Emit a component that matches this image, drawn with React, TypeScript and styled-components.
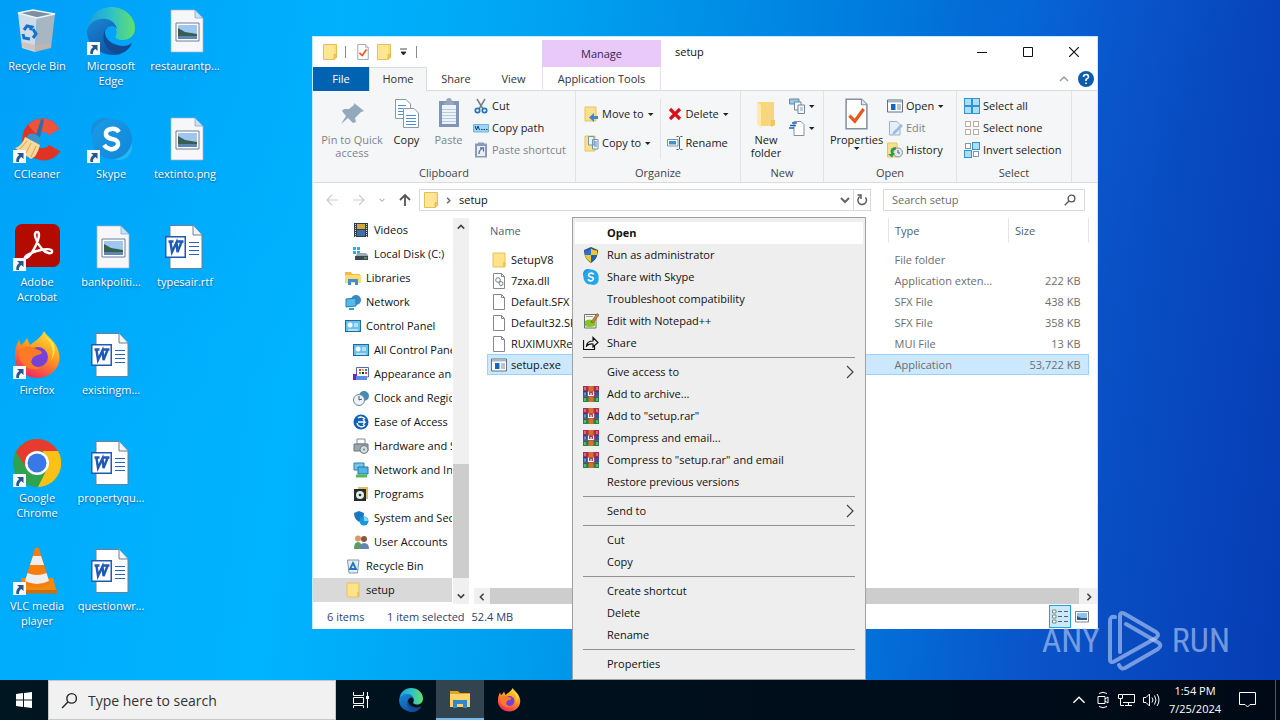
import React from "react";
import styled, { createGlobalStyle, css } from "styled-components";

const GlobalStyle = createGlobalStyle`
  *, *::before, *::after { box-sizing: border-box; }
  body { margin: 0; font-family: "Open Sans", "Noto Sans", sans-serif; font-size: 11px; line-height: 14px; color: #111; }
  button, input { font: inherit; color: inherit; margin: 0; padding: 0; border: 0; background: none; }
  button { cursor: default; }
  svg { display: block; flex: none; }
`;

const Screen = styled.div`
  display: flex;
  flex-direction: column;
  min-height: 100vh;
  overflow: hidden;
`;

const Desktop = styled.main`
  position: relative;
  flex: 1;
  min-height: 680px;
  background:
    linear-gradient(115deg, transparent 62%, rgba(0, 120, 235, 0.2) 64%, transparent 78%),
    radial-gradient(circle at 0% 0%, rgba(0, 140, 240, 0.35), transparent 32%),
    linear-gradient(97deg, #00a9fb 0%, #00b4ff 25%, #00a0f0 42%, #0078dc 66%, #0a53c8 82%, #053cb4 100%);
`;

/* ---------- desktop shortcuts ---------- */

const IconGrid = styled.div`
  display: grid;
  grid-auto-flow: column;
  grid-template-rows: repeat(6, 108px);
  grid-auto-columns: 74px;
  width: max-content;
`;

const Shortcut = styled.button`
  display: flex;
  flex-direction: column;
  align-items: center;
  gap: 3px;
  padding-top: 7px;
  color: #fff;
  line-height: 15px;
  text-align: center;
  text-shadow: 0 1px 2px rgba(0, 40, 90, 0.7);
`;

const ShortcutPicture = styled.span`
  position: relative;
  width: 48px;
  height: 48px;
`;

const LinkBadge = styled.svg`
  position: absolute;
  left: 0;
  bottom: 0;
`;

/* ---------- explorer window ---------- */

const Window = styled.section`
  position: absolute;
  inset: 36px 182px 51px 312px;
  min-width: 786px;
  display: flex;
  flex-direction: column;
  background: #fff;
  border: 1px solid #bdebff;
  border-bottom: 0;
`;

const TitleBar = styled.header`
  display: flex;
  height: 30px;
  flex: none;
`;

const QuickTools = styled.div`
  display: flex;
  align-items: center;
  gap: 8px;
  width: 229px;
  padding-left: 10px;
`;

const ToolButton = styled.button`
  display: flex;
  align-items: center;
  justify-content: center;
`;

const ThinRule = styled.span`
  width: 1px;
  height: 12px;
  margin-right: 3px;
  background: #8a8a8a;
`;

const ManageTab = styled.div`
  width: 119px;
  margin-top: 3px;
  background: #e9c9fa;
  color: #3a2350;
  text-align: center;
  line-height: 28px;
`;

const WindowTitle = styled.h1`
  flex: 1;
  margin: 0;
  padding-left: 14px;
  font-size: 11px;
  font-weight: 400;
  line-height: 30px;
`;

const CaptionButton = styled.button`
  width: 46px;
  display: flex;
  align-items: center;
  justify-content: center;
`;

const TabRow = styled.nav`
  display: flex;
  height: 24px;
  flex: none;
  border-bottom: 1px solid #dadbdc;
`;

const Tab = styled.button<{ $width: number; $kind?: "file" | "active" | "tools" }>`
  width: ${(p) => p.$width}px;
  height: 24px;
  padding-bottom: 1px;
  color: #333;
  ${(p) => p.$kind === "file" && css`background: #0063b1; color: #fff;`}
  ${(p) =>
    p.$kind === "active" &&
    css`background: #f5f6f7; border: solid #dadbdc; border-width: 1px 1px 0; padding-bottom: 2px;`}
  ${(p) => p.$kind === "tools" && css`border: solid #ecdcf5; border-width: 0 1px;`}
`;

const TabRowEnd = styled.div`
  display: flex;
  align-items: center;
  gap: 9px;
  margin-left: auto;
  padding-right: 3px;
`;

const Ribbon = styled.div`
  display: flex;
  height: 92px;
  flex: none;
  background: #f5f6f7;
  border-bottom: 1px solid #dadbdc;
`;

const RibbonGroup = styled.section<{ $width: number }>`
  width: ${(p) => p.$width}px;
  display: flex;
  flex-direction: column;
  border-right: 1px solid #e2e3e4;
`;

const GroupBody = styled.div`
  display: flex;
  flex: 1;
  padding: 4px 4px 0 6px;
`;

const GroupName = styled.h2`
  margin: 0;
  padding-bottom: 2px;
  font-size: 11px;
  font-weight: 400;
  line-height: 15px;
  color: #444;
  text-align: center;
`;

const BigButton = styled.button<{ $width: number; $dim?: boolean }>`
  width: ${(p) => p.$width}px;
  display: flex;
  flex-direction: column;
  align-items: center;
  padding-top: 3px;
  line-height: 13px;
  color: ${(p) => (p.$dim ? "#80838a" : "#222")};
  white-space: nowrap;
  & > svg:first-child { margin-bottom: 3px; }
`;

const SmallColumn = styled.div<{ $inset: number; $loose?: boolean }>`
  display: flex;
  flex-direction: column;
  gap: ${(p) => (p.$loose ? 7 : 0)}px;
  padding-top: ${(p) => (p.$loose ? 8 : 0)}px;
  padding-left: ${(p) => p.$inset}px;
`;

const SmallButton = styled.button<{ $dim?: boolean }>`
  display: flex;
  align-items: center;
  gap: 3px;
  height: 22px;
  white-space: nowrap;
  color: ${(p) => (p.$dim ? "#80838a" : "#222")};
`;

const ColumnRule = styled.span`
  width: 1px;
  margin: 4px 4px 6px 6px;
  background: #e2e3e4;
`;

const AddressRow = styled.div`
  display: flex;
  align-items: center;
  height: 34px;
  flex: none;
  padding: 0 12px;
`;

const HistoryButtons = styled.div`
  display: flex;
  align-items: center;
  gap: 13px;
  width: 94px;
`;

const AddressBox = styled.div`
  display: flex;
  flex: 1;
  height: 22px;
  border: 1px solid #d9d9d9;
`;

const Crumbs = styled.div`
  display: flex;
  flex: 1;
  align-items: center;
  gap: 7px;
  padding-left: 4px;
`;

const RefreshButton = styled(ToolButton)`
  width: 17px;
  border-left: 1px solid #d9d9d9;
`;

const ChevronButton = styled(ToolButton)`
  width: 16px;
`;

const SearchBox = styled.label`
  display: flex;
  align-items: center;
  width: 202px;
  height: 22px;
  margin-left: 12px;
  padding: 0 8px;
  border: 1px solid #d9d9d9;
  input { flex: 1; min-width: 0; height: 14px; outline: 0; }
  input::placeholder { color: #6d6d6d; opacity: 1; }
`;

const Panes = styled.div`
  display: flex;
  flex: 1;
  min-height: 0;
`;

const NavPane = styled.ul`
  width: 139px;
  margin: 0;
  padding: 1px 0 0;
  list-style: none;
  overflow: hidden;
`;

const NavItem = styled.li<{ $depth: number; $selected?: boolean }>`
  display: flex;
  align-items: center;
  gap: 5px;
  height: 24px;
  padding-left: ${(p) => 24 + p.$depth * 8}px;
  white-space: nowrap;
  background: ${(p) => (p.$selected ? "#d9d9d9" : "transparent")};
`;

const VerticalBar = styled.div`
  display: flex;
  flex-direction: column;
  width: 16px;
  margin: 1px 5px 0 1px;
  background: #f0f0f0;
`;

const ScrollTrack = styled.div`
  display: flex;
  flex: 1;
`;

const VerticalTrack = styled(ScrollTrack)`
  flex-direction: column;
  justify-content: flex-end;
`;

const VerticalThumb = styled.div`
  height: 114px;
  margin-bottom: 9px;
  background: #cdcdcd;
`;

const ScrollArrow = styled.button`
  width: 16px;
  height: 17px;
  display: flex;
  align-items: center;
  justify-content: center;
`;

const FilePane = styled.div`
  display: flex;
  flex-direction: column;
  flex: 1;
  min-width: 0;
`;

const FileArea = styled.div`
  flex: 1;
  padding: 1px 8px 0 13px;
`;

const FileTable = styled.table`
  width: 100%;
  border-collapse: collapse;
  table-layout: fixed;
  line-height: 15px;
  th { height: 25px; padding: 0 0 0 6px; font-weight: 400; text-align: left; color: #4c607a; }
  th:first-child { padding-left: 3px; border-right: 1px solid #e5e5e5; }
  th:nth-child(2), th:nth-child(3) { border-right: 1px solid #e5e5e5; }
  thead::after { content: ""; display: block; height: 6px; }
  td { height: 21px; padding: 0 4px 0 6px; color: #6d6d6d; white-space: nowrap; }
  td:first-child { padding-left: 4px; color: #111; }
  td:last-child { padding-right: 8px; text-align: right; }
`;

const TypeColumn = styled.col`
  width: 120px;
`;

const SizeColumn = styled.col`
  width: 80px;
`;

const FileRow = styled.tr<{ $selected?: boolean }>`
  ${(p) =>
    p.$selected &&
    css`background: #cce8ff; outline: 1px solid #99d1ff; outline-offset: -1px;`}
`;

const FileName = styled.span`
  display: flex;
  align-items: center;
  gap: 4px;
`;

const HorizontalBar = styled.div`
  display: flex;
  height: 16px;
  background: #f0f0f0;
`;

const HorizontalThumb = styled.div`
  flex: 1;
  margin-right: 2px;
  background: #cdcdcd;
`;

const StatusBar = styled.footer`
  display: flex;
  align-items: center;
  gap: 7px;
  height: 25px;
  flex: none;
  padding: 0 7px 0 14px;
  line-height: 15px;
  color: #33406b;
`;

const StatusCount = styled.span`
  width: 53px;
`;

const ViewSwitch = styled.div`
  display: flex;
  align-items: center;
  gap: 3px;
  margin-left: auto;
`;

const ViewButton = styled.button<{ $on?: boolean }>`
  display: flex;
  align-items: center;
  justify-content: center;
  width: ${(p) => (p.$on ? 22 : 16)}px;
  height: 23px;
  ${(p) => p.$on && css`background: #cbe8f6; border: 1px solid #26a0da;`}
`;

/* ---------- context menu ---------- */

const Menu = styled.div`
  position: absolute;
  left: 572px;
  top: 217px;
  width: 294px;
  padding: 4px 2px;
  background: #eee;
  border: 1px solid #a0a0a0;
`;

const MenuItem = styled.button<{ $main?: boolean }>`
  display: grid;
  grid-template-columns: 16px 1fr 10px;
  gap: 8px;
  align-items: center;
  width: 100%;
  height: 22px;
  padding: 0 7px 0 8px;
  text-align: left;
  ${(p) => p.$main && css`background: #fff; font-weight: 700;`}
`;

const MenuRule = styled.hr`
  height: 1px;
  margin: 3px 8px;
  border: 0;
  background: #919191;
`;

/* ---------- watermark ---------- */

const Watermark = styled.div`
  position: absolute;
  right: 50px;
  bottom: 9px;
  display: flex;
  align-items: center;
  gap: 7px;
  font-family: "Roboto Condensed", "Open Sans Condensed", "Roboto", sans-serif;
  font-size: 34px;
  line-height: 62px;
  color: rgba(190, 210, 245, 0.6);
  pointer-events: none;
`;

/* ---------- taskbar ---------- */

const Taskbar = styled.footer`
  display: flex;
  height: 40px;
  background: linear-gradient(90deg, #001620, #000d1a 70%, #000a16);
  color: #fff;
`;

const TaskButton = styled.button<{ $width: number; $active?: boolean }>`
  display: flex;
  align-items: center;
  justify-content: center;
  width: ${(p) => p.$width}px;
  height: 40px;
  ${(p) => p.$active && css`background: #32444f; border-bottom: 2px solid #76b9ed;`}
`;

const TaskSearch = styled.label`
  display: flex;
  align-items: center;
  gap: 10px;
  width: 288px;
  padding-left: 12px;
  background: #f1f1f1;
  border: 1px solid #c4c8ca;
  color: #222;
  font-size: 14px;
  input { flex: 1; min-width: 0; outline: 0; }
  input::placeholder { color: #333; opacity: 1; }
`;

const Tray = styled.div`
  display: flex;
  align-items: center;
  margin-left: auto;
`;

const TrayButton = styled(ToolButton)`
  width: 24px;
  height: 40px;
`;

const Clock = styled.time`
  width: 64px;
  line-height: 18px;
  text-align: center;
`;

const ShowDesktop = styled.button`
  width: 5px;
  height: 40px;
  margin-left: 8px;
  border-left: 1px solid #4d5860;
`;

/* ---------- drawings ---------- */

const Folder = ({ w = 14, h = 16 }: { w?: number; h?: number }) => (
  <svg width={w} height={h} viewBox="0 0 14 16">
    <path d="M0.5 0.5H13.5V13H11V15.5H0.5Z" fill="#fbdf82" stroke="#e6bf55" />
    <path d="M1 1H11V15H1Z" fill="#ffe693" />
    <path d="M11 10.5H13.5V13.5L11 15.5Z" fill="#f1c95b" stroke="#dfb246" strokeWidth=".7" />
  </svg>
);

const CheckedPage = ({ w = 12, h = 16 }: { w?: number; h?: number }) => (
  <svg width={w} height={h} viewBox="0 0 21 29">
    <path d="M1 1H15L20 6V28H1Z" fill="#fff" stroke="#8391a0" strokeWidth="1.4" />
    <path d="M15 1V6H20" fill="#dfe6ec" stroke="#8391a0" />
    <path d="M4 16L9 21L17 10" fill="none" stroke="#e8571c" strokeWidth="3" />
  </svg>
);

const Caret = () => (
  <svg width="7" height="5" viewBox="0 0 7 5"><path d="M1 1H6.500L3.700 4Z" fill="#222" /></svg>
);

const Chevron = ({ dir, size = 8, color = "#444", weight = 2 }: { dir: "up" | "down" | "left" | "right"; size?: number; color?: string; weight?: number }) => {
  const d = { up: "M1 7L5 3L9 7", down: "M1 3L5 7L9 3", left: "M7 1L3 5L7 9", right: "M3 1L7 5L3 9" }[dir];
  return (
    <svg width={size} height={size} viewBox="0 0 10 10"><path d={d} fill="none" stroke={color} strokeWidth={weight} /></svg>
  );
};

const NavArrow = ({ dir, color }: { dir: "left" | "right" | "up"; color: string }) => {
  const d = { left: "M13 7H2M7 2L2 7L7 12", right: "M1 7H12M7 2L12 7L7 12", up: "M7 13V2M2 7L7 2L12 7" }[dir];
  return (
    <svg width="14" height="14" viewBox="0 0 14 14"><path d={d} fill="none" stroke={color} strokeWidth={dir === "up" ? 1.8 : 1.2} /></svg>
  );
};

const Arrow = () => (
  <LinkBadge width="13" height="13" viewBox="0 0 13 13">
    <path d="M0 0H13V13H0Z" fill="#f6f8fb" />
    <path d="M4 3H10.5V9L8.4 7Q5.5 9 6 12H3.4Q2.5 8 6.2 5Z" fill="#27578f" />
  </LinkBadge>
);

const RecycleBin = ({ size = 48 }: { size?: number }) => (
  <svg width={size} height={size} viewBox="0 0 48 48">
    <path d="M5 6L24 10L22 45L9 41Z" fill="#cfdbe6" />
    <path d="M42 7L24 10L22 45L38 41Z" fill="#a7b6c3" />
    <path d="M5 6L20 3L42 7L24 11Z" fill="#7d909f" stroke="#eef4f8" strokeWidth="1.4" />
    <path d="M9 40L22 44L38 40L37 36L22 38L9 35Z" fill="#cdb4a6" opacity=".6" />
    <path d="M11 23L14 19L19 20L17 23M20 22L23 27L20 31M17 32L11 31L10 27" fill="none" stroke="#1273cf" strokeWidth="3" />
  </svg>
);

const Edge = ({ size = 48 }: { size?: number }) => (
  <svg width={size} height={size} viewBox="0 0 48 48">
    <defs>
      <linearGradient id="edgeTop" x1="0" y1=".5" x2="1" y2=".5"><stop offset="0" stopColor="#1b9de0" /><stop offset=".5" stopColor="#2fc2c8" /><stop offset="1" stopColor="#62e06b" /></linearGradient>
      <linearGradient id="edgeLeft" x1="0" y1="0" x2=".6" y2="1"><stop offset="0" stopColor="#1888d6" /><stop offset="1" stopColor="#0f56a8" /></linearGradient>
    </defs>
    <path d="M1 21C2 9 12 0 24 0C38 0 48 10 48 21C48 29 42 33 36 33C31 33 27 31 29 28C31 24 29 17 20 16C11 15 3 18 1 21Z" fill="url(#edgeTop)" />
    <path d="M0 24C2 14 12 11 19 12C25 13 29 17 30 22C27 17 20 18 18 25C16 34 23 44 34 47C18 51 0 41 0 24Z" fill="url(#edgeLeft)" />
    <path d="M18 23C13 34 21 46 32 47C38 46 44 40 45 36C41 39 36 40 30 38C23 36 17 31 18 23Z" fill="#124a94" />
  </svg>
);

const Picture = () => (
  <svg width="48" height="48" viewBox="0 0 48 48">
    <path d="M10 3H34L42 11V45H10Z" fill="#f7f7fa" stroke="#a9b4c0" strokeWidth=".7" />
    <path d="M34 3V11H42Z" fill="#bfe4fb" stroke="#7fa3c0" strokeWidth=".7" />
    <path d="M15 16H38V34H15Z" fill="#fff" stroke="#6b7f95" />
    <path d="M17 18H36V32H17Z" fill="#9fc6ee" />
    <path d="M17 21L24 25L36 27V29H17Z" fill="#365e52" />
    <path d="M17 29H36V32H17Z" fill="#5d87b3" />
  </svg>
);

const WordDoc = () => (
  <svg width="48" height="48" viewBox="0 0 48 48">
    <path d="M9 2.5H32L41 12V45.5H9Z" fill="#fff" stroke="#6f7f92" />
    <path d="M32 2.5V12H41" fill="#f0f3f7" stroke="#6f7f92" />
    <path d="M28 19.5H38M28 23.5H38M28 27.5H38M28 31.500H38" stroke="#2a66b8" />
    <path d="M4 13H25V35H4Z" fill="#1f58b5" />
    <path d="M5.5 14.5H23.5V33.5H5.5Z" fill="#fff" />
    <path d="M6.5 15.5H22.5V32.5H6.5Z" fill="#fff" />
    <path d="M7.500 18.500H12.500M9.5 19L11 29L15.500 19.500L16.5 29L20.5 19M16.500 18.500H22.500" fill="none" stroke="#1f58b5" strokeWidth="2.4" />
  </svg>
);

const CCleaner = () => (
  <svg width="48" height="48" viewBox="0 0 48 48">
    <path d="M46 14L36 20C32 14 22 16 22 25C22 33 31 36 36 30L47 36C42 45 31 48 21 43C9 37 6 22 13 12C22 0 40 1 46 14Z" fill="#df3325" />
    <path d="M46 14L36 20C33 16 27 16 24 20L15 10C25 0 40 2 46 14Z" fill="#f0533c" />
    <path d="M28 4L31 5L26 27L21 26Z" fill="#2c6fa8" />
    <path d="M16 19Q22 17 28 24L26 30L12 24Z" fill="#3c92c8" />
    <path d="M12 22L27 30Q24 42 18 44L2 33Q9 31 12 22Z" fill="#f8d999" />
    <path d="M7 34L14 26M13 38L18 28M18 42L23 31" stroke="#d9a45c" />
  </svg>
);

const SkypeGlyph = ({ size, small }: { size: number; small?: boolean }) => (
  <svg width={size} height={size} viewBox={small ? "4 3 42 42" : "0 0 48 48"}>
    <defs>
      <linearGradient id="skypeFace" x1="0" y1="0" x2="1" y2="1"><stop offset="0" stopColor="#1a9be8" /><stop offset="1" stopColor="#1186d8" /></linearGradient>
    </defs>
    <circle cx="17" cy="16" r="13" fill="#1590df" /><circle cx="32" cy="32" r="13" fill="#22b8f2" />
    <circle cx="25" cy="24" r="20" fill={small ? "#25a6ea" : "url(#skypeFace)"} />
    <path d="M32 17Q29 13 24 14Q18 15 19 20Q20 23 25 24Q32 25 31 30Q29 35 23 34Q19 33 17 30" fill="none" stroke="#fff" strokeWidth="4.5" />
  </svg>
);

const Acrobat = () => (
  <svg width="48" height="48" viewBox="0 0 48 48">
    <rect x="2" y="1" width="45" height="43" rx="7" fill="#b30b00" />
    <path d="M24 9C20 9 22 18 29 26C32 30 40 32 39 28C38 24 24 27 16 31C10 34 11 37 15 34C20 30 26 17 26 12Q26 9 24 9Z" fill="none" stroke="#fff" strokeWidth="2.4" />
  </svg>
);

const Firefox = ({ size = 48 }: { size?: number }) => (
  <svg width={size} height={size} viewBox="0 0 48 48">
    <defs>
      <linearGradient id="foxBody" x1=".8" y1="0" x2=".3" y2="1"><stop offset="0" stopColor="#ffe63a" /><stop offset=".45" stopColor="#ff9a1f" /><stop offset="1" stopColor="#f0245f" /></linearGradient>
    </defs>
    <path d="M31 0C34 6 43 9 46 22C49 36 38 47 25 47C11 47 0 36 2 23C2 17 4 13 6 9L8 14C10 13 13 9 14 7L17 14C22 10 29 6 31 0Z" fill="url(#foxBody)" />
    <circle cx="25" cy="26" r="10" fill="#7542d8" />
    <path d="M6 22C10 14 18 15 23 18C26 19 29 20 29 22C26 25 22 23 19 28C16 34 24 38 30 36C20 42 6 36 6 22Z" fill="#ff7a25" />
    <path d="M30 3C39 11 42 20 38 30C43 22 43 14 38 10Z" fill="#fff15a" opacity=".8" />
  </svg>
);

const Chrome = () => (
  <svg width="48" height="48" viewBox="0 0 48 48">
    <circle cx="24" cy="24" r="24" fill="#2fa14f" />
    <path d="M3 13A24 24 0 0 1 45 12H24L14 30Z" fill="#e63b2e" />
    <path d="M45 12A24 24 0 0 1 25 48L34 30L30 12Z" fill="#fbc116" />
    <circle cx="24" cy="24" r="12" fill="#fff" /><circle cx="24" cy="24" r="9.5" fill="#3b78e7" />
  </svg>
);

const Vlc = () => (
  <svg width="48" height="48" viewBox="0 0 48 48">
    <path d="M9 31H40L44 46H5Z" fill="#f08a12" /><path d="M5 43H44V46.5H5Z" fill="#d26c05" />
    <path d="M22 1Q24 0 26 1L37 37Q24 44 11 37Z" fill="#f57e0d" />
    <path d="M20 9H28L31 18H17ZM14.5 26Q24 30 33.5 26L36 34Q24 40 12 34Z" fill="#eceef0" />
  </svg>
);

const Pin = () => (
  <svg width="32" height="32" viewBox="0 0 32 32"><path d="M18 5L28 13L25 14L19 20L20 24L17 25L12 20L5 26L10 18L6 13L8 11H13L18 7Z" fill="#94a7bd" /></svg>
);

const CopyPages = () => (
  <svg width="26" height="32" viewBox="0 0 26 32">
    <g fill="#fff" stroke="#8797a8"><path d="M1.5 1.5H12L16.5 6V20.5H1.5Z" /><path d="M9.5 10.5H20L24.5 15V29.5H9.5Z" /></g>
    <path d="M4 7.5H12M4 10.5H9M4 13.5H9M4 16.5H9M12 17.5H22M12 20.5H22M12 23.5H22M12 26.5H22" stroke="#4c8ed0" />
  </svg>
);

const Clipboard = () => (
  <svg width="22" height="32" viewBox="0 0 22 32">
    <rect x="1" y="3" width="20" height="26" fill="#8094b5" /><path d="M4 7H18V26H4Z" fill="#edf3fa" />
    <path d="M6 4H8Q8 0 11 0Q14 0 14 4H16V7H6Z" fill="#98a6b9" />
    <path d="M4 11.5H18M4 14.5H18M4 17.5H18M4 20.5H18M4 23.5H18" stroke="#b9cbe0" />
  </svg>
);

const BigFolder = () => (
  <svg width="22" height="32" viewBox="0 0 22 32">
    <path d="M2 4H19V28H6L2 24Z" fill="#f8d77c" />
    <path d="M2 4L6 7V30L2 26Z" fill="#ffeaa8" />
    <path d="M16 22H20V27L16 29Z" fill="#efc662" />
  </svg>
);

const Scissors = () => (
  <svg width="16" height="16" viewBox="0 0 16 16"><path d="M4 1L10 11M12 1L6 11" stroke="#72808e" strokeWidth="1.5" /><circle cx="4.500" cy="12.5" r="2.2" fill="none" stroke="#2074b8" strokeWidth="1.7" /><circle cx="11.5" cy="12.5" r="2.2" fill="none" stroke="#2074b8" strokeWidth="1.7" /></svg>
);

const PathTag = () => (
  <svg width="16" height="16" viewBox="0 0 16 16"><path d="M.5 4.5H15.5V12H.5Z" fill="#9fd4f5" stroke="#6eb3de" /><path d="M2 6L3.5 10L5 6L6.5 10M8 9.5H9.5M10.5 9.5H12M13 9.5H14.5" fill="none" stroke="#1b3f66" /></svg>
);

const PasteShortcut = () => (
  <svg width="16" height="16" viewBox="0 0 16 16"><rect x="2" y="1.5" width="12" height="14" fill="#8b9bb5" /><path d="M4 4H12V14H4Z" fill="#e9eff6" /><path d="M5 .5H11V3H5Z" fill="#8b9bb5" /><path d="M6 12Q6 8 9 7M7 6H10.5V9.5" fill="none" stroke="#5b7396" strokeWidth="1.3" /></svg>
);

const MoveTo = () => (
  <svg width="15" height="17" viewBox="0 0 15 17"><path d="M1 1H12V15H1Z" fill="#fce08c" stroke="#e5c267" /><path d="M14 10H10V7L5 11.5L10 16V13H14Z" fill="#3b85d2" /></svg>
);

const CopyTo = () => (
  <svg width="15" height="17" viewBox="0 0 15 17"><path d="M1 1H11V16H1Z" fill="#fce08c" stroke="#e5c267" /><path d="M4.500 1.5H10V10H4.5ZM8.5 4.5H14V14H8.5Z" fill="#eaf3fc" stroke="#7894ad" /><path d="M10 7H13M10 9H13M10 11H13" stroke="#4a8ac8" /></svg>
);

const RedCross = () => (
  <svg width="16" height="16" viewBox="0 0 16 16"><path d="M3 3L13 13M13 3L3 13" stroke="#d8101d" strokeWidth="3.2" /></svg>
);

const RenameGlyph = () => (
  <svg width="16" height="16" viewBox="0 0 16 16"><path d="M.5 4.5H11V11H.5Z" fill="#fff" stroke="#7c91a6" /><path d="M2 6H9V9.5H2Z" fill="#3f8fd6" /><path d="M12.500 2V14M9.500 1.500H11.5L12.500 2.500L13.5 1.500H15.5M9.5 14.5H11.5L12.5 13.5L13.5 14.5H15.5" fill="none" stroke="#526270" /></svg>
);

const NewItem = () => (
  <svg width="16" height="16" viewBox="0 0 16 16"><g fill="#f4f8fc" stroke="#71879b"><path d="M.5 1H10V6H.5Z" fill="#8ecbee" /><path d="M5.5 4H12V12H5.5Z" /><path d="M9 7H15.5V15.5H9Z" /></g><path d="M11 10H14M11 12H14" stroke="#92a4b5" /></svg>
);

const EasyAccess = () => (
  <svg width="16" height="16" viewBox="0 0 16 16"><path d="M5 1.5H12L15 4.5V15.5H5Z" fill="#fff" stroke="#8292a2" /><path d="M3 3H8M1 5.5H7M0 8H5" stroke="#1f68b8" strokeWidth="1.3" /></svg>
);

const AppFrame = () => (
  <svg width="16" height="14" viewBox="0 0 16 14"><path d="M.5 1H15.5V13H.5Z" fill="#fff" stroke="#63717e" /><path d="M1 1H15V3.5H1Z" fill="#a9b7c4" /><path d="M4 5H8.5V11H4Z" fill="#1167c4" /><path d="M10 6H14M10 8H14M10 10H14" stroke="#70889e" /></svg>
);

const EditPage = () => (
  <svg width="16" height="16" viewBox="0 0 16 16"><path d="M2.5 1.5H10L13 4.5V15H2.5Z" fill="#e5eefa" stroke="#9cb1cd" /><path d="M6 12L14 4L16 6L8 14L5 15Z" fill="#9fbbe0" /></svg>
);

const HistoryGlyph = () => (
  <svg width="16" height="16" viewBox="0 0 16 16"><path d="M.5 1H10V15H.5Z" fill="#fce08c" stroke="#e5c267" /><circle cx="11" cy="10.5" r="4.5" fill="#e3e7ec" stroke="#8392a1" /><path d="M11 8V11H13" stroke="#586674" fill="none" /><path d="M9 5Q2 5 4 12L1 12L5 15.5L8 11H6Q5.5 8 9 7.5Z" fill="#2d9c45" /></svg>
);

const SelectGrid = ({ kind }: { kind: "all" | "none" | "invert" }) => {
  const cells: [number, number][] = [[0, 0], [1, 0], [0, 1], [1, 1]];
  return (
    <svg width="16" height="16" viewBox="0 0 16 16">
      {cells.map(([x, y]) => {
        const filled = kind === "all" || (kind === "invert" && x !== y);
        const size = filled ? 7 : 5;
        return (
          <rect key={`${x}${y}`} x={x * 8 + (filled ? 0.5 : 1.5)} y={y * 8 + (filled ? 0.5 : 1.5)} width={size} height={size}
            fill={filled ? "#a9defc" : "#fff"} stroke={filled ? "#3492cf" : kind === "none" ? "#bfa9a3" : "#7d97ab"} />
        );
      })}
    </svg>
  );
};

const Magnifier = ({ size, color, weight }: { size: number; color: string; weight: number }) => (
  <svg width={size} height={size} viewBox="0 0 16 16"><circle cx="10" cy="6" r="4.5" fill="none" stroke={color} strokeWidth={weight} /><path d="M6.5 9.5L1 15" stroke={color} strokeWidth={weight} /></svg>
);

const Refresh = () => (
  <svg width="12" height="12" viewBox="0 0 12 12"><path d="M9.5 3.5A4.3 4.3 0 1 1 4 2.5M1.5 1H5V5" fill="none" stroke="#555" strokeWidth="1.4" /></svg>
);

const navGlyphs: Record<string, React.ReactNode> = {
  Videos: <><path d="M1 1H15V15H1Z" fill="#333c48" /><path d="M4 2H12V7H4Z" fill="#d0a93e" /><path d="M4 8H12V14H4Z" fill="#3f6ea7" /><path d="M2.5 2V15M13.5 2V15" stroke="#d8dee5" strokeDasharray="1 1" /></>,
  "Local Disk (C:)": <><path d="M0 1H3V4H0ZM4 1H7V4H4ZM0 5H3V8H0ZM4 5H7V8H4Z" fill="#1fb2e2" /><path d="M3 9L5 7H13L15 9V13H2Z" fill="#a0a8b0" /><path d="M2 10H15V14H2Z" fill="#3f4850" /><path d="M11 12H14" stroke="#55e26c" /></>,
  Libraries: <><path d="M0 2H6L7 4H15V13H0Z" fill="#f5bd3c" /><path d="M0 5H16V13H0Z" fill="#ffdb72" /><path d="M3 15V9H13V15H10V12H6V15Z" fill="#3c8fd8" /></>,
  Network: <><circle cx="11" cy="6" r="5" fill="#3c8bc1" /><path d="M1 5L11 4V12L1 13Z" fill="#54b8ea" stroke="#227fb5" /><path d="M4 15H9" stroke="#4598c2" strokeWidth="2" /></>,
  "Control Panel": <><rect x=".5" y="2.5" width="15" height="11" fill="#69bfed" stroke="#1c6c9e" /><circle cx="5" cy="7" r="2.5" fill="#fff" /><path d="M9 6H13M9 8H13M3 12H13" stroke="#fff" /></>,
  "All Control Panel Items": <><rect x=".5" y="2.5" width="15" height="11" fill="#69bfed" stroke="#1c6c9e" /><circle cx="5" cy="7" r="2.5" fill="#fff" /><path d="M9 6H13M9 8H13M3 12H13" stroke="#fff" /></>,
  "Appearance and Personalization": <><path d="M3.500 1.500H15.500V11H3.500Z" fill="#fff" stroke="#536ab5" /><path d="M6 3H8V5H6ZM12 6H14V8H12Z" fill="#e33d3d" /><path d="M9 3H11V5H9Z" fill="#f3aa21" /><path d="M12 3H14V5H12Z" fill="#3d70cc" /><path d="M6 6H8V8H6Z" fill="#2eae57" /><path d="M9 6H11V8H9Z" fill="#222" /><path d="M0 8H4V14H0Z" fill="#7e21b8" /><path d="M3 10H14V14H3Z" fill="#5f8be0" /></>,
  "Clock and Region": <><circle cx="11" cy="6" r="5" fill="#478bb1" /><circle cx="6" cy="10" r="5.5" fill="#edf2f6" stroke="#718696" /><path d="M6 6V10L9 9" fill="none" stroke="#465968" /></>,
  "Ease of Access": <><circle cx="8" cy="8" r="7.5" fill="#1161b8" /><path d="M4 9A4.5 4.5 0 0 0 12 11M5 4A5 5 0 0 1 12 5M5 8H12L10 5M12 8L10 11" fill="none" stroke="#fff" strokeWidth="1.3" /></>,
  "Hardware and Sound": <><path d="M4 1H12V6H4Z" fill="#fff" stroke="#7f8b94" /><path d="M1 6H15V13H1Z" fill="#9da7af" stroke="#69767f" /><circle cx="11" cy="11.5" r="4" fill="#d4dce2" stroke="#6f7b84" /><circle cx="11" cy="11.5" r="1" fill="#596" /></>,
  "Network and Internet": <><path d="M1 1H11V8H1Z" fill="#79c6ec" stroke="#2c7fae" /><path d="M5 5H15V12H5Z" fill="#4fb5e4" stroke="#2476a4" /><path d="M3 14H14" stroke="#58b859" strokeWidth="3" /></>,
  Programs: <><path d="M5 1H15V13H5Z" fill="#e4b76d" /><rect x="1" y="3" width="12" height="12" fill="#252b2d" /><circle cx="7" cy="9" r="4" fill="#e4e9ea" /><circle cx="7" cy="9" r="1.3" fill="#28322c" /></>,
  "System and Security": <><path d="M1 3L6 1L11 3Q11 10 6 12Q1 9 1 3Z" fill="#1b78be" /><circle cx="11" cy="11" r="4.5" fill="#1699d9" /><path d="M11 11V7A4 4 0 0 1 15 11Z" fill="#8ad3f4" /></>,
  "User Accounts": <><circle cx="5" cy="4.5" r="3" fill="#d79c60" /><path d="M1 15Q1 8 5 8Q9 8 9 15Z" fill="#5e9e5d" /><circle cx="11" cy="5" r="3" fill="#8c5738" /><path d="M7 15Q7 9 11 9Q16 9 16 15Z" fill="#6185b5" /></>,
};

const NavGlyph = ({ name }: { name: string }) => {
  if (name === "setup") return <svg width="16" height="16" viewBox="-1 0 16 16"><path d="M1 1H13V15H1Z" fill="#ffe28a" stroke="#e8c158" /><path d="M11 10H13.5V14L11 15Z" fill="#efc55a" /></svg>;
  if (name === "Recycle Bin") return (
    <svg width="16" height="16" viewBox="0 0 16 16"><path d="M2.5 2H14L12.5 15H4Z" fill="#e5edf4" stroke="#8195a7" /><path d="M8 5L11 11H5Z" fill="none" stroke="#1c73c6" strokeWidth="1.8" /></svg>
  );
  return <svg width="16" height="16" viewBox="0 0 16 16">{navGlyphs[name]}</svg>;
};

const PlainFile = ({ gear }: { gear?: boolean }) => (
  <svg width="16" height="16" viewBox="-2 0 16 16"><path d="M.5 .5H8.5L11.5 3.5V15.5H.5Z" fill="#fff" stroke="#85898e" /><path d="M8.5 .5V3.5H11.5" fill="none" stroke="#85898e" />
    {gear && <g fill="none" stroke="#71808e"><circle cx="5" cy="7" r="2.3" /><circle cx="8" cy="10.5" r="2" /></g>}</svg>
);

const Shield = () => (
  <svg width="16" height="16" viewBox="0 0 16 16"><path d="M8 0L15 3Q15 12 8 16Q1 12 1 3Z" fill="#33566f" /><path d="M8 1.5V8H2Q1.8 6 2 3.5Q6 3.5 8 1.5Z" fill="#2175ca" /><path d="M8 1.5V8H14Q14.2 6 14 3.5Q10 3.5 8 1.5ZM8 8V15Q3 12.5 2 8Z" fill="#f6c631" /><path d="M8 8V15Q13 12.5 14 8Z" fill="#1b62b6" /></svg>
);

const Notepad = () => (
  <svg width="16" height="16" viewBox="0 0 16 16"><path d="M1.500 1.500H13V15H1.500Z" fill="#f6f7ed" stroke="#6c726b" /><path d="M3 3.500H10" stroke="#9ba39a" /><path d="M2 8Q6 5 12 8V13Q6 15 2 13Z" fill="#84c52c" /><path d="M8 9L14 0.500L16 2L10 10Z" fill="#cc8b39" stroke="#5c4b30" strokeWidth=".6" /></svg>
);

const ShareGlyph = () => (
  <svg width="16" height="16" viewBox="0 0 16 16"><path d="M.5 5V14.500H11.500V11M3.500 11Q4 6 10 6V2.500L15 7.500L10 12V9Q6 8.5 3.500 11Z" fill="none" stroke="#111" strokeWidth="1.2" /></svg>
);

const WinRar = () => (
  <svg width="16" height="16" viewBox="0 0 16 16">
    <path d="M0 0H16V5H0Z" fill="#b7274f" /><path d="M0 5.500H16V10.500H0Z" fill="#2f55a8" /><path d="M0 11H16V16H0Z" fill="#238745" />
    <path d="M0 5H16V5.700H0ZM0 10.400H16V11.200H0Z" fill="#222" />
    <path d="M5.500 0H10.500V16H5.500Z" fill="#d7702a" /><path d="M4 5.500H12V10.500H4Z" fill="#a83a5a" />
    <path d="M5.500 5.500V9.500H8V7M10.500 9.500V5.500M8 9.500H10.500" fill="none" stroke="#fff" strokeWidth="1.1" />
    <path d="M2 1V4M2 12V15M14 12V15M2 6.500V9.500M14 1V4" stroke="#e0d8e4" strokeWidth=".8" />
  </svg>
);

const ExplorerGlyph = () => (
  <svg width="22" height="22" viewBox="0 0 22 22"><path d="M1 3H9L11 5H21V19H1Z" fill="#e6a225" /><path d="M1 6H21V19H1Z" fill="#ffd365" /><path d="M4 20V12H18V20H14V16H8V20Z" fill="#3288cb" /></svg>
);

const AnyRunMark = () => (
  <svg width="58" height="62" viewBox="0 0 58 62">
    <g fill="none" stroke="currentColor" strokeWidth="4" strokeLinecap="round" strokeLinejoin="round">
      <path d="M8 8Q3 7 3 12V50Q3 55 8 52L49 29Q53 26 49 23L18 5Q13 2 13 7V43" />
      <path d="M19 15L52 34Q55 37 51 40L18 59Q14 61 12 56" />
    </g>
  </svg>
);

/* ---------- data ---------- */

const shortcuts: { label: string; art: React.ReactNode; link?: boolean }[] = [
  { label: "Recycle Bin", art: <RecycleBin /> },
  { label: "CCleaner", art: <CCleaner />, link: true },
  { label: "Adobe Acrobat", art: <Acrobat />, link: true },
  { label: "Firefox", art: <Firefox />, link: true },
  { label: "Google Chrome", art: <Chrome />, link: true },
  { label: "VLC media player", art: <Vlc />, link: true },
  { label: "Microsoft Edge", art: <Edge />, link: true },
  { label: "Skype", art: <SkypeGlyph size={48} />, link: true },
  { label: "bankpoliti...", art: <Picture /> },
  { label: "existingm...", art: <WordDoc /> },
  { label: "propertyqu...", art: <WordDoc /> },
  { label: "questionwr...", art: <WordDoc /> },
  { label: "restaurantp...", art: <Picture /> },
  { label: "textinto.png", art: <Picture /> },
  { label: "typesair.rtf", art: <WordDoc /> },
];

const navItems: [string, number][] = [
  ["Videos", 2], ["Local Disk (C:)", 2], ["Libraries", 1], ["Network", 1], ["Control Panel", 1],
  ["All Control Panel Items", 2], ["Appearance and Personalization", 2], ["Clock and Region", 2],
  ["Ease of Access", 2], ["Hardware and Sound", 2], ["Network and Internet", 2], ["Programs", 2],
  ["System and Security", 2], ["User Accounts", 2], ["Recycle Bin", 1], ["setup", 1],
];

const files: { name: string; type: string; size: string; icon: React.ReactNode }[] = [
  { name: "SetupV8", type: "File folder", size: "", icon: <NavGlyph name="setup" /> },
  { name: "7zxa.dll", type: "Application exten...", size: "222 KB", icon: <PlainFile gear /> },
  { name: "Default.SFX", type: "SFX File", size: "438 KB", icon: <PlainFile /> },
  { name: "Default32.SFX", type: "SFX File", size: "358 KB", icon: <PlainFile /> },
  { name: "RUXIMUXRes.dll.mui", type: "MUI File", size: "13 KB", icon: <PlainFile /> },
  { name: "setup.exe", type: "Application", size: "53,722 KB", icon: <AppFrame /> },
];

const menu: { label: string; icon?: React.ReactNode; sub?: boolean }[][] = [
  [
    { label: "Open" },
    { label: "Run as administrator", icon: <Shield /> },
    { label: "Share with Skype", icon: <SkypeGlyph size={16} small /> },
    { label: "Troubleshoot compatibility" },
    { label: "Edit with Notepad++", icon: <Notepad /> },
    { label: "Share", icon: <ShareGlyph /> },
  ],
  [
    { label: "Give access to", sub: true },
    { label: "Add to archive...", icon: <WinRar /> },
    { label: 'Add to "setup.rar"', icon: <WinRar /> },
    { label: "Compress and email...", icon: <WinRar /> },
    { label: 'Compress to "setup.rar" and email', icon: <WinRar /> },
    { label: "Restore previous versions" },
  ],
  [{ label: "Send to", sub: true }],
  [{ label: "Cut" }, { label: "Copy" }],
  [{ label: "Create shortcut" }, { label: "Delete" }, { label: "Rename" }],
  [{ label: "Properties" }],
];

/* ---------- page ---------- */

const ExplorerRibbon = () => (
  <Ribbon>
    <RibbonGroup $width={263}>
      <GroupBody>
        <BigButton $width={66} $dim><Pin />Pin to Quick<br />access</BigButton>
        <BigButton $width={43}><CopyPages />Copy</BigButton>
        <BigButton $width={41} $dim><Clipboard />Paste</BigButton>
        <SmallColumn $inset={4}>
          <SmallButton><Scissors />Cut</SmallButton>
          <SmallButton><PathTag />Copy path</SmallButton>
          <SmallButton $dim><PasteShortcut />Paste shortcut</SmallButton>
        </SmallColumn>
      </GroupBody>
      <GroupName>Clipboard</GroupName>
    </RibbonGroup>
    <RibbonGroup $width={165}>
      <GroupBody>
        <SmallColumn $inset={2} $loose>
          <SmallButton><MoveTo />Move to<Caret /></SmallButton>
          <SmallButton><CopyTo />Copy to<Caret /></SmallButton>
        </SmallColumn>
        <ColumnRule />
        <SmallColumn $inset={2} $loose>
          <SmallButton><RedCross />Delete<Caret /></SmallButton>
          <SmallButton><RenameGlyph />Rename</SmallButton>
        </SmallColumn>
      </GroupBody>
      <GroupName>Organize</GroupName>
    </RibbonGroup>
    <RibbonGroup $width={83}>
      <GroupBody>
        <BigButton $width={38}><BigFolder />New<br />folder</BigButton>
        <SmallColumn $inset={4}>
          <SmallButton aria-label="New item"><NewItem /><Caret /></SmallButton>
          <SmallButton aria-label="Easy access"><EasyAccess /><Caret /></SmallButton>
        </SmallColumn>
      </GroupBody>
      <GroupName>New</GroupName>
    </RibbonGroup>
    <RibbonGroup $width={133}>
      <GroupBody>
        <BigButton $width={53}><CheckedPage w={23} h={32} />Properties<Caret /></BigButton>
        <SmallColumn $inset={4}>
          <SmallButton><AppFrame />Open<Caret /></SmallButton>
          <SmallButton $dim><EditPage />Edit</SmallButton>
          <SmallButton><HistoryGlyph />History</SmallButton>
        </SmallColumn>
      </GroupBody>
      <GroupName>Open</GroupName>
    </RibbonGroup>
    <RibbonGroup $width={115}>
      <GroupBody>
        <SmallColumn $inset={1}>
          <SmallButton><SelectGrid kind="all" />Select all</SmallButton>
          <SmallButton><SelectGrid kind="none" />Select none</SmallButton>
          <SmallButton><SelectGrid kind="invert" />Invert selection</SmallButton>
        </SmallColumn>
      </GroupBody>
      <GroupName>Select</GroupName>
    </RibbonGroup>
  </Ribbon>
);

const Explorer = () => (
  <Window aria-label="setup">
    <TitleBar>
      <QuickTools>
        <Folder />
        <ThinRule />
        <ToolButton aria-label="Properties"><CheckedPage /></ToolButton>
        <ToolButton aria-label="New folder"><Folder /></ToolButton>
        <ToolButton aria-label="Customize"><svg width="9" height="8" viewBox="0 0 9 8"><path d="M1 1H8M2 4H7L4.5 7Z" fill="#222" stroke="#222" strokeWidth=".8" /></svg></ToolButton>
        <ThinRule />
      </QuickTools>
      <ManageTab>Manage</ManageTab>
      <WindowTitle>setup</WindowTitle>
      <CaptionButton aria-label="Minimize"><svg width="10" height="10"><path d="M0 5.5H10" stroke="#111" /></svg></CaptionButton>
      <CaptionButton aria-label="Maximize"><svg width="10" height="10"><path d="M.5 .5H9.5V9.5H.5Z" fill="none" stroke="#111" /></svg></CaptionButton>
      <CaptionButton aria-label="Close"><svg width="10" height="10"><path d="M0 0L10 10M10 0L0 10" stroke="#111" strokeWidth="1.2" /></svg></CaptionButton>
    </TitleBar>
    <TabRow>
      <Tab $width={56} $kind="file">File</Tab>
      <Tab $width={58} $kind="active">Home</Tab>
      <Tab $width={58}>Share</Tab>
      <Tab $width={57}>View</Tab>
      <Tab $width={119} $kind="tools">Application Tools</Tab>
      <TabRowEnd>
        <ToolButton aria-label="Collapse ribbon"><Chevron dir="up" size={10} color="#999" weight={1.5} /></ToolButton>
        <ToolButton aria-label="Help"><svg width="16" height="16" viewBox="0 0 16 16"><circle cx="8" cy="8" r="8" fill="#0d5cab" /><path d="M5.5 6Q5.5 3.5 8 3.5Q10.5 3.5 10.5 6Q10.5 7 8 8.5V10M8 11.5V13" fill="none" stroke="#fff" strokeWidth="1.6" /></svg></ToolButton>
      </TabRowEnd>
    </TabRow>
    <ExplorerRibbon />
    <AddressRow>
      <HistoryButtons>
        <ToolButton aria-label="Back"><NavArrow dir="left" color="#ccc" /></ToolButton>
        <ToolButton aria-label="Forward"><NavArrow dir="right" color="#ccc" /></ToolButton>
        <ToolButton aria-label="Recent locations"><Chevron dir="down" size={6} color="#bbb" /></ToolButton>
        <ToolButton aria-label="Up"><NavArrow dir="up" color="#555" /></ToolButton>
      </HistoryButtons>
      <AddressBox>
        <Crumbs><Folder /><Chevron dir="right" size={7} color="#666" />setup</Crumbs>
        <ChevronButton aria-label="Previous locations"><Chevron dir="down" size={10} color="#666" /></ChevronButton>
        <RefreshButton aria-label="Refresh"><Refresh /></RefreshButton>
      </AddressBox>
      <SearchBox>
        <input type="text" placeholder="Search setup" aria-label="Search setup" />
        <Magnifier size={12} color="#555" weight={1.8} />
      </SearchBox>
    </AddressRow>
    <Panes>
      <NavPane>
        {navItems.map(([name, depth]) => (
          <NavItem key={name} $depth={depth} $selected={name === "setup"}><NavGlyph name={name} />{name}</NavItem>
        ))}
      </NavPane>
      <VerticalBar>
        <ScrollArrow aria-label="Scroll up"><Chevron dir="up" /></ScrollArrow>
        <VerticalTrack><VerticalThumb /></VerticalTrack>
        <ScrollArrow aria-label="Scroll down"><Chevron dir="down" /></ScrollArrow>
      </VerticalBar>
      <FilePane>
        <FileArea>
          <FileTable>
            <colgroup><col /><TypeColumn /><SizeColumn /></colgroup>
            <thead><tr><th>Name</th><th>Type</th><th>Size</th></tr></thead>
            <tbody>
              {files.map((f) => (
                <FileRow key={f.name} $selected={f.name === "setup.exe"}>
                  <td><FileName>{f.icon}{f.name}</FileName></td>
                  <td>{f.type}</td>
                  <td>{f.size}</td>
                </FileRow>
              ))}
            </tbody>
          </FileTable>
        </FileArea>
        <HorizontalBar>
          <ScrollArrow aria-label="Scroll left"><Chevron dir="left" /></ScrollArrow>
          <ScrollTrack><HorizontalThumb /></ScrollTrack>
          <ScrollArrow aria-label="Scroll right"><Chevron dir="right" /></ScrollArrow>
        </HorizontalBar>
      </FilePane>
    </Panes>
    <StatusBar>
      <StatusCount>6 items</StatusCount>
      <span>1 item selected</span>
      <span>52.4 MB</span>
      <ViewSwitch>
        <ViewButton $on aria-label="Details view"><svg width="16" height="15" viewBox="0 0 16 15"><path d="M.5 1H4V4H.5ZM.5 6H4V9H.5ZM.5 11H4V14H.5Z" fill="#fff" stroke="#7b8790" /><path d="M6 2.5H10M12 2.5H16M6 7.5H10M12 7.5H16M6 12.5H10M12 12.5H16" stroke="#50606c" /></svg></ViewButton>
        <ViewButton aria-label="Large icons view"><svg width="14" height="12" viewBox="0 0 14 12"><path d="M.5 .5H13.5V11H.5Z" fill="#fff" stroke="#76838f" /><path d="M2 2H12V9H2Z" fill="#8ec1ee" /><path d="M2 5L6 7L12 7V9H2Z" fill="#315f7d" /></svg></ViewButton>
      </ViewSwitch>
    </StatusBar>
  </Window>
);

export default function App() {
  return (
    <Screen>
      <GlobalStyle />
      <Desktop>
        <IconGrid>
          {shortcuts.map((s) => (
            <Shortcut key={s.label}>
              <ShortcutPicture>{s.art}{s.link && <Arrow />}</ShortcutPicture>
              {s.label}
            </Shortcut>
          ))}
        </IconGrid>
        <Explorer />
        <Menu role="menu">
          {menu.map((group, i) => (
            <React.Fragment key={i}>
              {i > 0 && <MenuRule />}
              {group.map((item) => (
                <MenuItem key={item.label} role="menuitem" $main={item.label === "Open"}>
                  <span>{item.icon}</span>
                  <span>{item.label}</span>
                  {item.sub && <svg width="8" height="14" viewBox="0 0 8 14"><path d="M1 1L7 7L1 13" fill="none" stroke="#444" strokeWidth="1.2" /></svg>}
                </MenuItem>
              ))}
            </React.Fragment>
          ))}
        </Menu>
        <Watermark><span>ANY</span><AnyRunMark /><span>RUN</span></Watermark>
      </Desktop>
      <Taskbar>
        <TaskButton $width={48} aria-label="Start"><svg width="16" height="16" viewBox="0 0 16 16"><path d="M0 2L7 1V7.5H0ZM8 1L16 0V7.5H8ZM0 8.5H7V15L0 14ZM8 8.5H16V16L8 15Z" fill="#fff" /></svg></TaskButton>
        <TaskSearch>
          <Magnifier size={17} color="#222" weight={1.3} />
          <input type="text" placeholder="Type here to search" aria-label="Type here to search" />
        </TaskSearch>
        <TaskButton $width={50} aria-label="Task view"><svg width="18" height="16" viewBox="0 0 18 16"><path d="M1.5 0V3.5H11.5V0M1.5 5.5H11.5V11.5H1.5ZM1.5 16V13.5H11.5V16M15.5 0V16" fill="none" stroke="#fff" /><path d="M14 4H17V7H14Z" fill="#fff" /></svg></TaskButton>
        <TaskButton $width={50} aria-label="Microsoft Edge"><Edge size={24} /></TaskButton>
        <TaskButton $width={48} $active aria-label="File Explorer"><ExplorerGlyph /></TaskButton>
        <TaskButton $width={50} aria-label="Firefox"><Firefox size={24} /></TaskButton>
        <Tray>
          <TrayButton aria-label="Show hidden icons"><Chevron dir="up" size={14} color="#fff" weight={1} /></TrayButton>
          <TrayButton aria-label="Meet now"><svg width="16" height="18" viewBox="0 0 16 18"><path d="M4 2.5Q8 0 12 2.5M4 15.5Q8 18 12 15.5M3 5.5H10V12.5H3ZM10 8L13 6V12L10 10" fill="none" stroke="#fff" /></svg></TrayButton>
          <TrayButton aria-label="Network"><svg width="18" height="16" viewBox="0 0 18 16"><path d="M5 2.5H16.5V10.5H5M.5 2.5H4.5V6.5H.5ZM2.5 6.5V13.5H6M10.5 10.5V13.5M7 13.5H14" fill="none" stroke="#fff" /></svg></TrayButton>
          <TrayButton aria-label="Volume"><svg width="17" height="16" viewBox="0 0 17 16"><path d="M.5 5.5H3L6.5 2V14L3 10.5H.5ZM9 5.5Q11 8 9 10.5M11.5 3.5Q14.5 8 11.5 12.5M14 2Q18 8 14 14" fill="none" stroke="#fff" /></svg></TrayButton>
          <Clock>1:54 PM<br />7/25/2024</Clock>
          <TaskButton $width={40} aria-label="Notifications"><svg width="17" height="16" viewBox="0 0 17 16"><path d="M.5 .5H16.5V12.5H11L8.5 15L6 12.5H.5Z" fill="none" stroke="#fff" /></svg></TaskButton>
          <ShowDesktop aria-label="Show desktop" />
        </Tray>
      </Taskbar>
    </Screen>
  );
}
